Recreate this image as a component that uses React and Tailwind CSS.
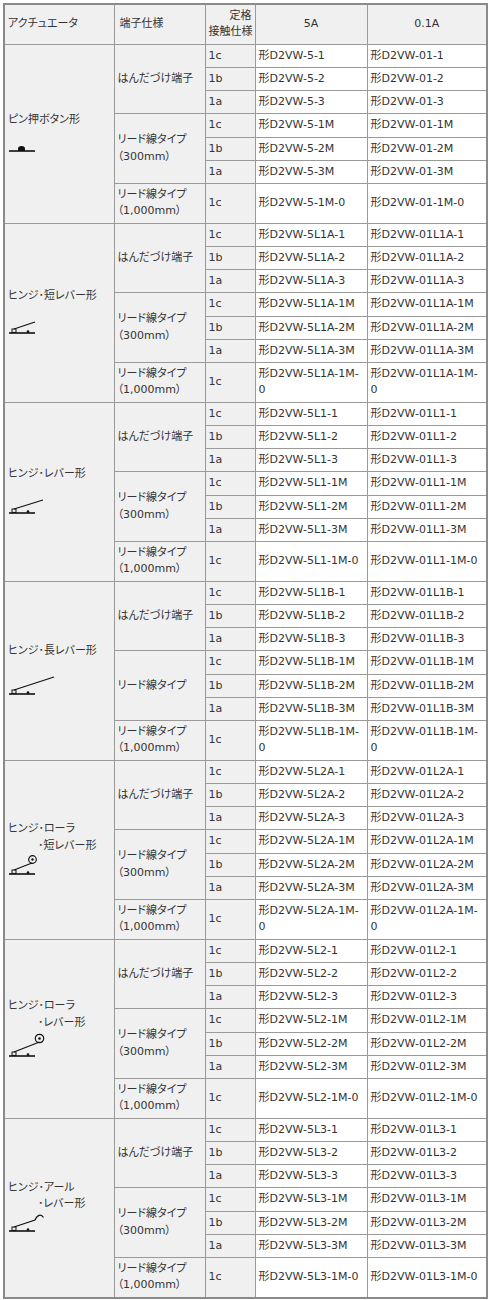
import React from 'react'

const groups = [
  { name: ['ピン押ボタン形'], code: '', icon: 'pin', mid: 'リード線タイプ\n（300mm）', wrap5: false, wrap01: false },
  { name: ['ヒンジ･短レバー形'], code: 'L1A', icon: 'short', mid: 'リード線タイプ\n（300mm）', wrap5: true, wrap01: true },
  { name: ['ヒンジ･レバー形'], code: 'L1', icon: 'lever', mid: 'リード線タイプ\n（300mm）', wrap5: false, wrap01: false },
  { name: ['ヒンジ･長レバー形'], code: 'L1B', icon: 'long', mid: 'リード線タイプ', wrap5: true, wrap01: true },
  { name: ['ヒンジ･ローラ', '･短レバー形'], code: 'L2A', icon: 'rollerShort', mid: 'リード線タイプ\n（300mm）', wrap5: true, wrap01: false },
  { name: ['ヒンジ･ローラ', '･レバー形'], code: 'L2', icon: 'roller', mid: 'リード線タイプ\n（300mm）', wrap5: false, wrap01: false },
  { name: ['ヒンジ･アール', '･レバー形'], code: 'L3', icon: 'hook', mid: 'リード線タイプ\n（300mm）', wrap5: false, wrap01: false },
]

function Base({ y }) {
  return (
    <>
      <line x1="1" y1={y} x2="27" y2={y} stroke="#111" strokeWidth="1.6" />
      <rect x="4" y={y - 4} width="4" height="3.4" fill="none" stroke="#111" strokeWidth="1" />
      <circle cx="20" cy={y - 1.4} r="1.3" fill="#111" />
    </>
  )
}

function Icon({ type }) {
  if (type === 'pin') return (
    <svg width="60" height="26" className="block">
      <line x1="1" y1="22" x2="27" y2="22" stroke="#111" strokeWidth="1.6" />
      <path d="M10 22 L10 19.5 Q10 17 13.5 17 Q17 17 17 19.5 L17 22 Z" fill="#111" />
    </svg>
  )
  if (type === 'short') return (
    <svg width="60" height="32" className="block">
      <Base y={28} />
      <line x1="6" y1="24" x2="27" y2="17" stroke="#111" strokeWidth="1.2" />
    </svg>
  )
  if (type === 'lever') return (
    <svg width="60" height="34" className="block">
      <Base y={30} />
      <line x1="6" y1="26" x2="35" y2="17" stroke="#111" strokeWidth="1.2" />
    </svg>
  )
  if (type === 'long') return (
    <svg width="60" height="38" className="block">
      <Base y={34} />
      <line x1="6" y1="30" x2="46" y2="17" stroke="#111" strokeWidth="1.2" />
    </svg>
  )
  if (type === 'rollerShort') return (
    <svg width="60" height="24" className="block">
      <Base y={20} />
      <line x1="6" y1="16" x2="24" y2="9" stroke="#111" strokeWidth="1.2" />
      <circle cx="24.5" cy="5.5" r="3.8" fill="none" stroke="#111" strokeWidth="1.2" />
      <circle cx="24.5" cy="5.5" r="1.2" fill="#111" />
    </svg>
  )
  if (type === 'roller') return (
    <svg width="60" height="28" className="block">
      <Base y={25} />
      <line x1="6" y1="21" x2="31.5" y2="11" stroke="#111" strokeWidth="1.2" />
      <circle cx="31.5" cy="7.5" r="4.2" fill="none" stroke="#111" strokeWidth="1.2" />
      <circle cx="31.5" cy="7.5" r="1.3" fill="#111" />
    </svg>
  )
  return (
    <svg width="60" height="23" className="block">
      <Base y={19} />
      <path d="M6 15 L27 8 C29 3 33 1.5 35.5 5.5" fill="none" stroke="#111" strokeWidth="1.2" />
    </svg>
  )
}

const gray = 'border border-[#9a9a9a] bg-[#f0f0f0] px-[3px] py-[3px] align-middle'
const white = 'border border-[#9a9a9a] bg-white px-[3px] py-[3px] align-middle whitespace-pre-line'

function Group({ g }) {
  const m5 = s => `形D2VW-5${g.code}-${s}`
  const m01 = s => `形D2VW-01${g.code}-${s}`
  const rows = [
    ['1c', '1'], ['1b', '2'], ['1a', '3'],
    ['1c', '1M'], ['1b', '2M'], ['1a', '3M'],
    ['1c', '1M-0'],
  ]
  return rows.map(([contact, s], i) => {
    const last = i === 6
    const a = last && g.wrap5 ? m5('1M-') + '\n0' : m5(s)
    const b = last && g.wrap01 ? m01('1M-') + '\n0' : m01(s)
    return (
      <tr key={i}>
        {i === 0 && (
          <td rowSpan={7} className={gray}>
            <div>{g.name[0]}</div>
            {g.name[1] && <div className="pl-[30px]">{g.name[1]}</div>}
            <Icon type={g.icon} />
          </td>
        )}
        {i === 0 && <td rowSpan={3} className={gray}>はんだづけ端子</td>}
        {i === 3 && <td rowSpan={3} className={gray + ' whitespace-pre-line'}>{g.mid}</td>}
        {i === 6 && <td className={gray + ' whitespace-pre-line'}>{'リード線タイプ\n（1,000mm）'}</td>}
        <td className={gray}>{contact}</td>
        <td className={white}>{a}</td>
        <td className={white}>{b}</td>
      </tr>
    )
  })
}

export default function App() {
  return (
    <div className="bg-white p-[3px] text-[#333] text-[11px] leading-[16.25px] font-['DejaVu_Sans','Noto_Sans_CJK_JP',sans-serif] [font-feature-settings:'palt']">
      <table className="table-fixed border-collapse border-2 border-[#8a8a8a] w-[483px]">
        <colgroup>
          <col className="w-[110px]" />
          <col className="w-[91px]" />
          <col className="w-[50px]" />
          <col className="w-[112px]" />
          <col className="w-[120px]" />
        </colgroup>
        <thead>
          <tr>
            <th className={gray + ' text-left font-normal'}>アクチュエータ</th>
            <th className={gray + ' text-left font-normal pl-[5px]'}>端子仕様</th>
            <th className={gray + ' text-right font-normal whitespace-nowrap'}>
              <div>定格</div>
              <div>接触仕様</div>
            </th>
            <th className={gray + ' text-center font-normal'}>5A</th>
            <th className={gray + ' text-center font-normal'}>0.1A</th>
          </tr>
        </thead>
        <tbody>
          {groups.map((g, i) => <Group key={i} g={g} />)}
        </tbody>
      </table>
    </div>
  )
}
